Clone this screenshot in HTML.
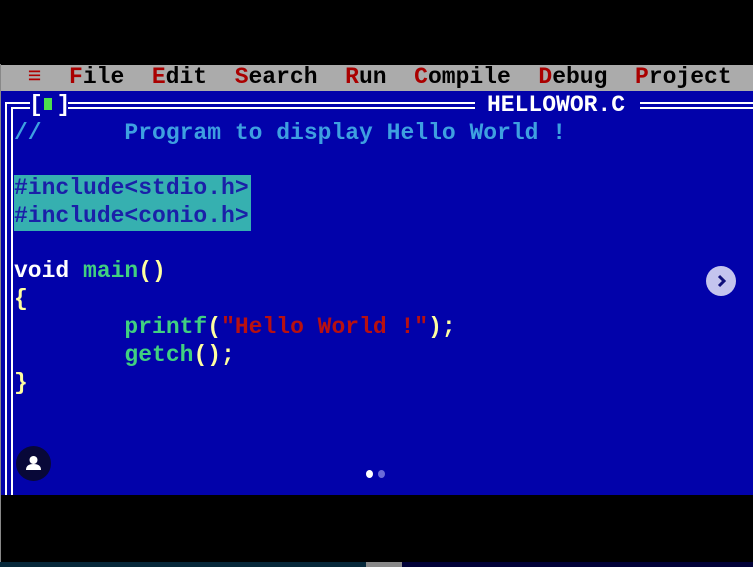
<!DOCTYPE html>
<html><head><style>
body{margin:0;width:753px;height:567px;background:#000;position:relative;overflow:hidden;font-family:"Liberation Mono",monospace;font-weight:bold;font-size:23px}
.a{position:absolute;white-space:pre;line-height:28px}
</style></head><body>
<div style="position:absolute;left:0;top:64px;width:1px;height:498px;background:#888"></div>
<div style="position:absolute;left:1px;top:65px;width:752px;height:26px;background:#ababab"></div>
<div style="position:absolute;left:1px;top:91px;width:752px;height:404px;background:#0202aa"></div>
<!-- menu -->
<div class="a" style="left:0;top:63px;color:#000;line-height:28px">  <span style="color:#b00000">≡</span>  <span style="color:#a00">F</span>ile  <span style="color:#a00">E</span>dit  <span style="color:#a00">S</span>earch  <span style="color:#a00">R</span>un  <span style="color:#a00">C</span>ompile  <span style="color:#a00">D</span>ebug  <span style="color:#a00">P</span>roject</div>
<!-- frame -->
<div style="position:absolute;left:5px;top:102px;width:2px;height:393px;background:#fff"></div>
<div style="position:absolute;left:11px;top:107px;width:2px;height:388px;background:#fff"></div>
<div style="position:absolute;left:5px;top:102px;width:25px;height:2px;background:#fff"></div>
<div style="position:absolute;left:11px;top:107px;width:19px;height:2px;background:#fff"></div>
<div style="position:absolute;left:68px;top:102px;width:407px;height:2px;background:#fff"></div>
<div style="position:absolute;left:68px;top:107px;width:407px;height:2px;background:#fff"></div>
<div style="position:absolute;left:640px;top:102px;width:113px;height:2px;background:#fff"></div>
<div style="position:absolute;left:640px;top:107px;width:113px;height:2px;background:#fff"></div>
<div class="a" style="left:29px;top:91px;color:#fff">[ ]</div>
<div style="position:absolute;left:44px;top:98px;width:8px;height:12px;background:#4de04d"></div>
<div class="a" style="left:487px;top:91px;color:#fff;font-size:23px">HELLOWOR.C</div>
<!-- code -->
<div style="position:absolute;left:14px;top:175px;width:237px;height:56px;background:#36b0b0"></div>
<div class="a" style="left:14px;top:119px;color:#3ea0e0">//      Program to display Hello World !</div>
<div class="a" style="left:14px;top:174px;color:#1a20a8">#include&lt;stdio.h&gt;
#include&lt;conio.h&gt;</div>
<div class="a" style="left:14px;top:257px;color:#fff">void <span style="color:#40d080">main</span><span style="color:#ffffa0">()</span></div>
<div class="a" style="left:14px;top:285px;color:#ffffa0">{</div>
<div class="a" style="left:14px;top:313px;color:#ffffa0">        <span style="color:#40d080">printf</span>(<span style="color:#b81010">"Hello World !"</span>);</div>
<div class="a" style="left:14px;top:341px;color:#ffffa0">        <span style="color:#40d080">getch</span>();</div>
<div class="a" style="left:14px;top:369px;color:#ffffa0">}</div>
<!-- overlays -->
<div style="position:absolute;left:706px;top:266px;width:30px;height:30px;border-radius:50%;background:#c4c4ee"></div>
<svg style="position:absolute;left:706px;top:266px" width="30" height="30"><path d="M13 10 L18 15 L13 20" stroke="#10107a" stroke-width="3" fill="none"/></svg>
<div style="position:absolute;left:16px;top:446px;width:35px;height:35px;border-radius:50%;background:#080838"></div>
<svg style="position:absolute;left:16px;top:446px" width="35" height="35"><circle cx="17.5" cy="14" r="4" fill="#fff"/><path d="M10 24 Q10 18 17.5 18 Q25 18 25 24 Z" fill="#fff"/></svg>
<div style="position:absolute;left:366px;top:470px;width:7px;height:8px;border-radius:50%;background:#fff"></div>
<div style="position:absolute;left:378px;top:470px;width:7px;height:8px;border-radius:50%;background:#6a6ad8"></div>
<!-- bottom strip -->
<div style="position:absolute;left:0;top:562px;width:366px;height:5px;background:#06283a"></div>
<div style="position:absolute;left:366px;top:562px;width:36px;height:5px;background:#888"></div>
<div style="position:absolute;left:402px;top:562px;width:351px;height:5px;background:#020238"></div>
</body></html>
